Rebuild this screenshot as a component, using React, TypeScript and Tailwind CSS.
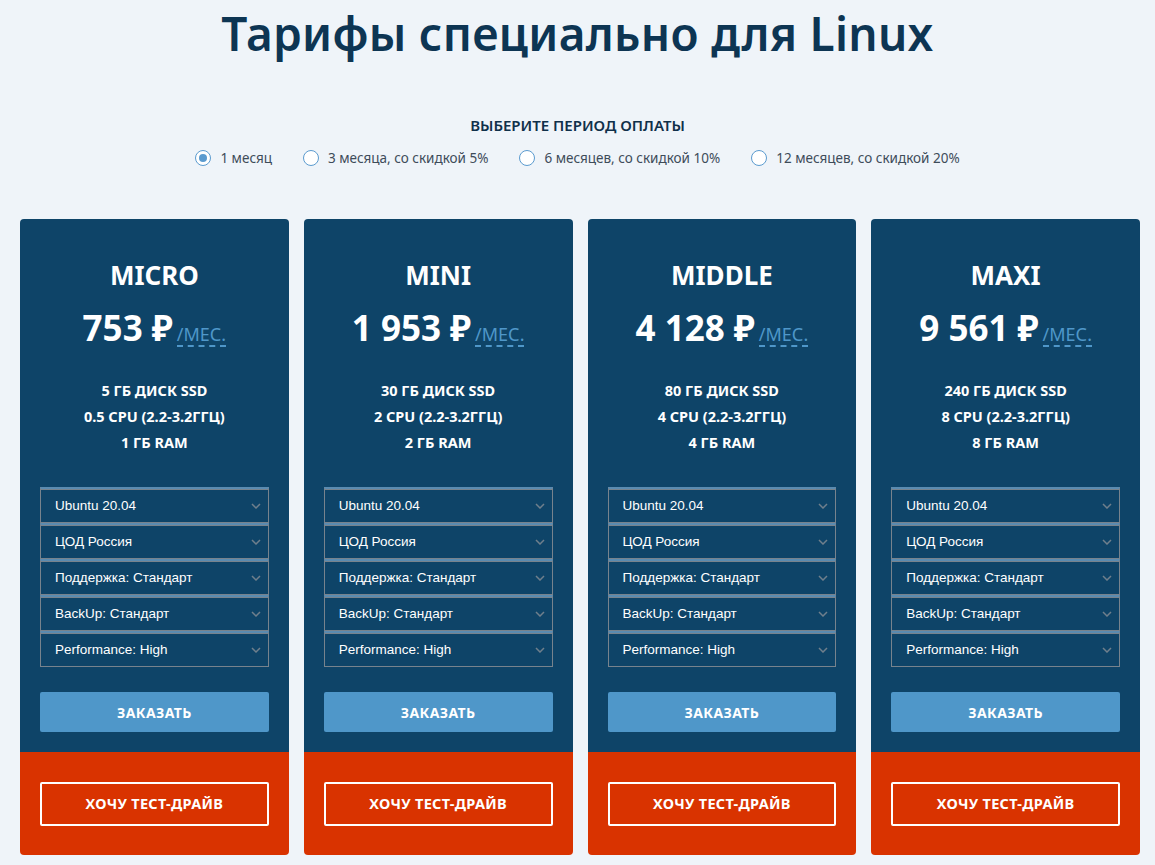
import React from "react";

const plans = [
  { name: "MICRO", price: "753 ₽", disk: "5 ГБ ДИСК SSD", cpu: "0.5 CPU (2.2-3.2ГГЦ)", ram: "1 ГБ RAM" },
  { name: "MINI", price: "1 953 ₽", disk: "30 ГБ ДИСК SSD", cpu: "2 CPU (2.2-3.2ГГЦ)", ram: "2 ГБ RAM" },
  { name: "MIDDLE", price: "4 128 ₽", disk: "80 ГБ ДИСК SSD", cpu: "4 CPU (2.2-3.2ГГЦ)", ram: "4 ГБ RAM" },
  { name: "MAXI", price: "9 561 ₽", disk: "240 ГБ ДИСК SSD", cpu: "8 CPU (2.2-3.2ГГЦ)", ram: "8 ГБ RAM" },
];

const selects = ["Ubuntu 20.04", "ЦОД Россия", "Поддержка: Стандарт", "BackUp: Стандарт", "Performance: High"];

const periods = [
  { label: "1 месяц", checked: true },
  { label: "3 месяца, со скидкой 5%", checked: false },
  { label: "6 месяцев, со скидкой 10%", checked: false },
  { label: "12 месяцев, со скидкой 20%", checked: false },
];

function Chevron() {
  return (
    <svg width="10" height="6" viewBox="0 0 10 6" fill="none">
      <path d="M1 1l4 4 4-4" stroke="#6f7f8c" strokeWidth="1.5" />
    </svg>
  );
}

export default function App() {
  const font = { fontFamily: '"Noto Sans", Lato, sans-serif' };
  return (
    <div className="w-[1155px] h-[865px] bg-[#eff4f9] overflow-hidden" style={font}>
      <h1 className="text-center text-[46px] leading-[66px] font-semibold text-[#0d3553] tracking-[0.3px]">
        Тарифы специально для Linux
      </h1>
      <div className="mt-[49px] text-center text-[15px] leading-[20px] font-semibold text-[#10304a] uppercase">
        Выберите период оплаты
      </div>
      <div className="mt-[13px] flex justify-center gap-[31px] text-[13.5px] text-[#3e4c59]">
        {periods.map((p) => (
          <label key={p.label} className="flex items-center gap-[9px]">
            <span className="w-[16px] h-[16px] rounded-full border border-[#5b9bcf] bg-white flex items-center justify-center">
              {p.checked && <span className="w-[8px] h-[8px] rounded-full bg-[#5b9bcf]" />}
            </span>
            <span>{p.label}</span>
          </label>
        ))}
      </div>
      <div className="ml-[20px] mt-[51px] w-[1120px] grid grid-cols-4 gap-[15px]">
        {plans.map((p) => (
          <div key={p.name} className="rounded-[4px] overflow-hidden flex flex-col">
            <div className="bg-[#0e4468] px-[20px] pt-[39px] pb-[20px] flex flex-col items-center text-white">
              <div className="text-[26px] leading-[34px] font-bold">{p.name}</div>
              <div className="mt-[15px] flex items-end">
                <span className="text-[35px] leading-[42px] font-bold">{p.price}</span>
                <span className="ml-[4px] mb-[2px] text-[18px] leading-[22px] text-[#4f97c9] border-b-2 border-dashed border-[#4f97c9]">
                  /МЕС.
                </span>
              </div>
              <div className="mt-[28px] text-[14.5px] leading-[26px] font-bold text-center">
                <div>{p.disk}</div>
                <div>{p.cpu}</div>
                <div>{p.ram}</div>
              </div>
              <div className="mt-[32px] w-full flex flex-col" style={{ fontFamily: '"Liberation Sans", Arial, sans-serif' }}>
                {selects.map((s) => (
                  <div
                    key={s}
                    className="h-[36px] border border-[#77838d] border-t-2 border-t-[#5a8bb0] shadow-[inset_0_1px_0_#77838d] flex items-center justify-between pl-[14px] pr-[7px] text-[13.5px] text-white"
                  >
                    <span>{s}</span>
                    <Chevron />
                  </div>
                ))}
              </div>
              <button className="mt-[25px] w-full h-[40px] rounded-[2px] bg-[#4f97c9] text-[14px] font-bold text-white uppercase tracking-[0.4px]">
                Заказать
              </button>
            </div>
            <div className="bg-[#d93300] h-[103px] px-[20px] flex items-center">
              <button className="w-full h-[44px] border-2 border-white rounded-[2px] text-[14.5px] font-bold text-white uppercase tracking-[0.3px]">
                Хочу тест-драйв
              </button>
            </div>
          </div>
        ))}
      </div>
    </div>
  );
}
